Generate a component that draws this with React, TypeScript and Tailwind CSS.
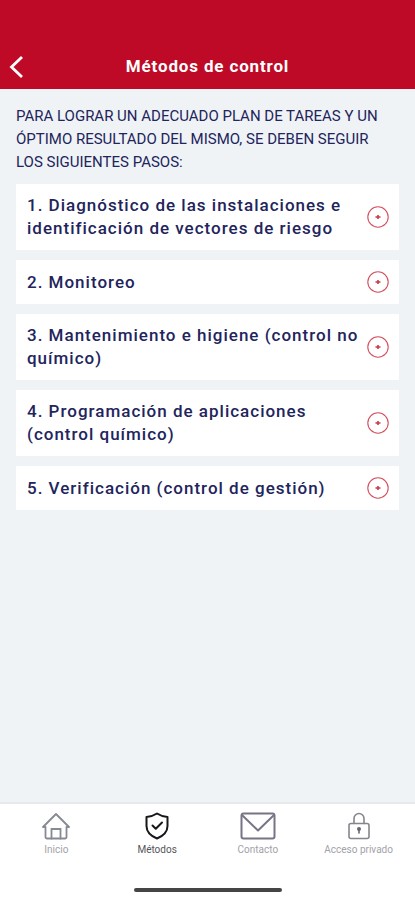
import type { ReactNode } from "react";

const steps = [
  "1. Diagnóstico de las instalaciones e identificación de vectores de riesgo",
  "2. Monitoreo",
  "3. Mantenimiento e higiene (control no químico)",
  "4. Programación de aplicaciones (control químico)",
  "5. Verificación (control de gestión)",
];

function PlusCircle() {
  return (
    <svg width="22" height="22" viewBox="0 0 22 22" fill="none" stroke="#d4505f" className="shrink-0" aria-hidden="true">
      <circle cx="11" cy="11" r="10.2" strokeWidth="1.1" />
      <path d="M8.5 11h5M11 9v4" stroke="#c93a4b" strokeWidth="1.6" />
    </svg>
  );
}

function HomeIcon() {
  return (
    <svg width="28" height="28" viewBox="0 0 28 28" fill="none" stroke="#868a93" strokeWidth="1.8" strokeLinejoin="round" strokeLinecap="round" aria-hidden="true">
      <path d="M1 15 14 2l13 13h-2.500V25a1.500 1.500 0 0 1-1.500 1.500H5A1.500 1.500 0 0 1 3.500 25V15Z" />
      <path d="M9.500 26.500V17h9v9.500" strokeLinejoin="miter" />
    </svg>
  );
}

function ShieldIcon() {
  return (
    <svg width="28" height="28" viewBox="0 0 28 28" fill="none" stroke="#17171b" strokeWidth="2" strokeLinejoin="round" strokeLinecap="round" aria-hidden="true">
      <path d="M14 1.500C11 3.500 7.500 4.600 3.500 5v9c0 6 4.500 10 10.500 12.500C20 24 24.500 20 24.500 14V5C20.500 4.600 17 3.500 14 1.500Z" />
      <path d="m9.500 13.500 3.300 3.300 6.200-6.300" />
    </svg>
  );
}

function MailIcon() {
  return (
    <svg width="36" height="28" viewBox="0 0 36 28" fill="none" stroke="#777486" strokeWidth="2" strokeLinejoin="round" aria-hidden="true">
      <rect x="1.500" y="1.500" width="33" height="25" rx="2" />
      <path d="m2 3 16 15.500L34 3" />
    </svg>
  );
}

function LockIcon() {
  return (
    <svg width="22" height="28" viewBox="0 0 22 28" fill="none" stroke="#85858c" strokeWidth="1.600" strokeLinecap="round" aria-hidden="true">
      <rect x="1" y="11.500" width="20" height="15" rx="2" />
      <path d="M6 11.500V6.500a5 5 0 0 1 10 0v5" />
      <circle cx="11" cy="17" r="1.200" fill="#66666e" stroke="#66666e" />
      <path d="M11 17.500v3.500" stroke="#66666e" />
    </svg>
  );
}

const tabs: { label: string; icon: ReactNode; active?: boolean }[] = [
  { label: "Inicio", icon: <HomeIcon /> },
  { label: "Métodos", icon: <ShieldIcon />, active: true },
  { label: "Contacto", icon: <MailIcon /> },
  { label: "Acceso privado", icon: <LockIcon /> },
];

export default function App() {
  return (
    <div className="flex min-h-screen flex-col bg-[#eff3f6] font-['Roboto',sans-serif] text-[#22245c]">
      <header className="grid grid-cols-[40px_1fr_40px] items-center bg-[#be0a26] pt-[45px] text-white">
        <button type="button" aria-label="Volver" className="flex h-11 items-center pl-2">
          <svg width="16" height="24" viewBox="0 0 16 24" fill="none" stroke="currentColor" strokeWidth="2.800" aria-hidden="true">
            <path d="M14 2 3.500 12 14 22" />
          </svg>
        </button>
        <h1 className="text-center text-[17px] font-bold tracking-wider">Métodos de control</h1>
      </header>

      <main className="flex-1 px-4 pt-4">
        <p className="text-[15px] leading-[23px]">
          PARA LOGRAR UN ADECUADO PLAN DE TAREAS Y UN ÓPTIMO RESULTADO DEL MISMO, SE DEBEN SEGUIR LOS SIGUIENTES PASOS:
        </p>
        <ul className="mt-[10px] flex flex-col gap-[10px]">
          {steps.map((step) => (
            <li key={step}>
              <button type="button" className="flex min-h-11 w-full items-center justify-between gap-1 bg-white py-[10px] pr-[10px] pl-[11px] text-left">
                <span className="text-[17px] leading-[23px] font-medium tracking-[1px]">{step}</span>
                <PlusCircle />
              </button>
            </li>
          ))}
        </ul>
      </main>

      <footer className="border-t-2 border-[#e7e9ec] bg-white">
        <nav className="grid grid-cols-4 px-[6px] pt-2">
          {tabs.map((tab) => (
            <a
              key={tab.label}
              href="#"
              aria-current={tab.active ? "page" : undefined}
              className={`flex flex-col items-center gap-1 text-[10px] leading-[12px] whitespace-nowrap ${tab.active ? "text-[#55555b]" : "text-[#a2a2a9]"}`}
            >
              {tab.icon}
              {tab.label}
            </a>
          ))}
        </nav>
        <div className="mx-auto mt-8 mb-2 h-1 w-37 rounded-full bg-[#454545]" />
      </footer>
    </div>
  );
}
